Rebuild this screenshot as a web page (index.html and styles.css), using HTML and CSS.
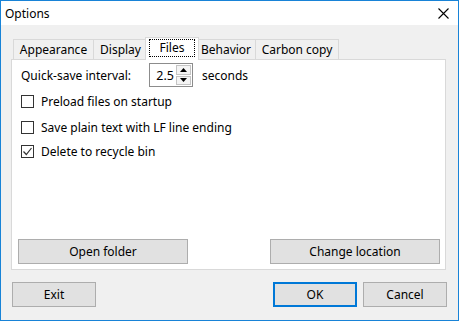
FILE: index.html
```html
<!DOCTYPE html>
<html>
<head>
<meta charset="utf-8">
<link rel="stylesheet" href="styles.css">
</head>
<body>
<div class="window">
  <div class="titlebar">
    <span class="title">Options</span>
    <svg class="close" width="11" height="11" viewBox="0 0 11 11"><path d="M0.5 0.5 L10.5 10.5 M10.5 0.5 L0.5 10.5" stroke="#000" stroke-width="1.1" fill="none"/></svg>
  </div>
  <div class="content">
    <div class="tabs">
      <div class="tab tab-appearance">Appearance</div>
      <div class="tab tab-display">Display</div>
      <div class="tab tab-files selected"><span class="focus">Files</span></div>
      <div class="tab tab-behavior">Behavior</div>
      <div class="tab tab-carbon">Carbon copy</div>
    </div>
    <div class="panel">
      <div class="spin-row">
        <span class="spin-label">Quick-save interval:</span>
        <div class="spin">
          <span class="spin-value">2.5</span>
          <div class="spin-btns">
            <div class="spin-btn"><svg width="7" height="4" viewBox="0 0 7 4"><path d="M3.5 0 L7 4 L0 4 Z" fill="#000"/></svg></div>
            <div class="spin-btn"><svg width="7" height="4" viewBox="0 0 7 4"><path d="M0 0 L7 0 L3.5 4 Z" fill="#000"/></svg></div>
          </div>
        </div>
        <span class="spin-unit">seconds</span>
      </div>
      <div class="check-row"><span class="box"></span><span>Preload files on startup</span></div>
      <div class="check-row wide-gap"><span class="box"></span><span>Save plain text with LF line ending</span></div>
      <div class="check-row"><span class="box"><svg width="11" height="11" viewBox="0 0 11 11"><path d="M1.5 5.5 L4.3 8.5 L9.5 2" stroke="#333" stroke-width="1.2" fill="none"/></svg></span><span>Delete to recycle bin</span></div>
      <div class="panel-buttons">
        <button class="btn wide">Open folder</button>
        <button class="btn wide">Change location</button>
      </div>
    </div>
    <div class="footer">
      <button class="btn exit">Exit</button>
      <div class="footer-right">
        <button class="btn default">OK</button>
        <button class="btn">Cancel</button>
      </div>
    </div>
  </div>
</div>
</body>
</html>
```
FILE: styles.css
```css
* { box-sizing: border-box; }
body {
  margin: 0;
  font-family: "Noto Sans", "Open Sans", sans-serif;
  font-size: 12px;
  color: #000;
}
.window {
  width: 459px;
  height: 321px;
  border: 1px solid #1883d7;
  background: #f0f0f0;
  display: flex;
  flex-direction: column;
}
.titlebar {
  height: 24px;
  background: #fff;
  display: flex;
  align-items: center;
  justify-content: space-between;
  padding: 0 9px 0 4px;
}
.title { font-size: 12px; }
.close { display: block; }
.content {
  flex: 1;
  display: flex;
  flex-direction: column;
  padding: 12px 12px 0 10px;
}
.tabs {
  display: flex;
  align-items: flex-end;
  height: 22px;
  padding-left: 2px;
  position: relative;
  z-index: 1;
}
.tab {
  height: 20px;
  border: 1px solid #d9d9d9;
  border-bottom: none;
  background: #f0f0f0;
  display: flex;
  align-items: center;
  justify-content: center;
  white-space: nowrap;
  padding-bottom: 1px;
}
.tab-appearance { width: 81px; }
.tab-display { width: 55px; margin-left: -1px; }
.tab-files { width: 54px; margin-left: -3px; }
.tab-behavior { width: 60px; margin-left: -3px; }
.tab-carbon { width: 84px; margin-left: -1px; }
.tab.selected {
  height: 23px;
  margin-bottom: -1px;
  background: #fff;
  position: relative;
  z-index: 2;
  padding-bottom: 3px;
}
.focus {
  border: 1px dotted #000;
  padding: 0 5px;
  height: 18px;
  display: flex;
  align-items: center;
  width: 46px;
  justify-content: center;
}
.panel {
  height: 211px;
  border: 1px solid #d9d9d9;
  background: #fff;
  display: flex;
  flex-direction: column;
  padding: 3px 5px 5px 9px;
}
.spin-row {
  display: flex;
  align-items: center;
  height: 24px;
}
.spin-label { width: 128px; }
.spin {
  width: 44px;
  height: 24px;
  border: 1px solid #8c8c8c;
  display: flex;
  align-items: center;
  justify-content: flex-end;
  padding: 1px;
}
.spin-value { padding-right: 2px; font-size: 12.5px; }
.spin-btns {
  width: 15px;
  height: 100%;
  display: flex;
  flex-direction: column;
  gap: 1px;
}
.spin-btn {
  flex: 1;
  background: #f4f4f4;
  border: 1px solid #c4c4c4;
  display: flex;
  align-items: center;
  justify-content: center;
}
.spin-btn svg { display: block; }
.spin-unit { margin-left: 9px; }
.check-row {
  display: flex;
  align-items: center;
  height: 20px;
  margin-top: 4px;
  gap: 7px;
}
.check-row.wide-gap { margin-top: 6px; }
.box {
  width: 13px;
  height: 13px;
  border: 1px solid #333;
  background: #fff;
  display: flex;
  align-items: center;
  justify-content: center;
}
.box svg { display: block; }
.panel-buttons {
  margin-top: auto;
  display: flex;
  justify-content: space-between;
  margin-left: -3px;
}
.btn {
  font-family: inherit;
  font-size: 12px;
  color: #000;
  height: 25px;
  width: 84px;
  background: #e1e1e1;
  border: 1px solid #adadad;
  padding: 0;
  margin: 0;
}
.btn.wide { width: 170px; }
.btn.default {
  border: 1px solid #0078d7;
  box-shadow: inset 0 0 0 1px #0078d7;
}
.footer {
  margin-top: 12px;
  display: flex;
  justify-content: space-between;
}
.exit { margin-left: 1px; }
.footer-right {
  display: flex;
  gap: 6px;
  margin-right: -1px;
}
```
